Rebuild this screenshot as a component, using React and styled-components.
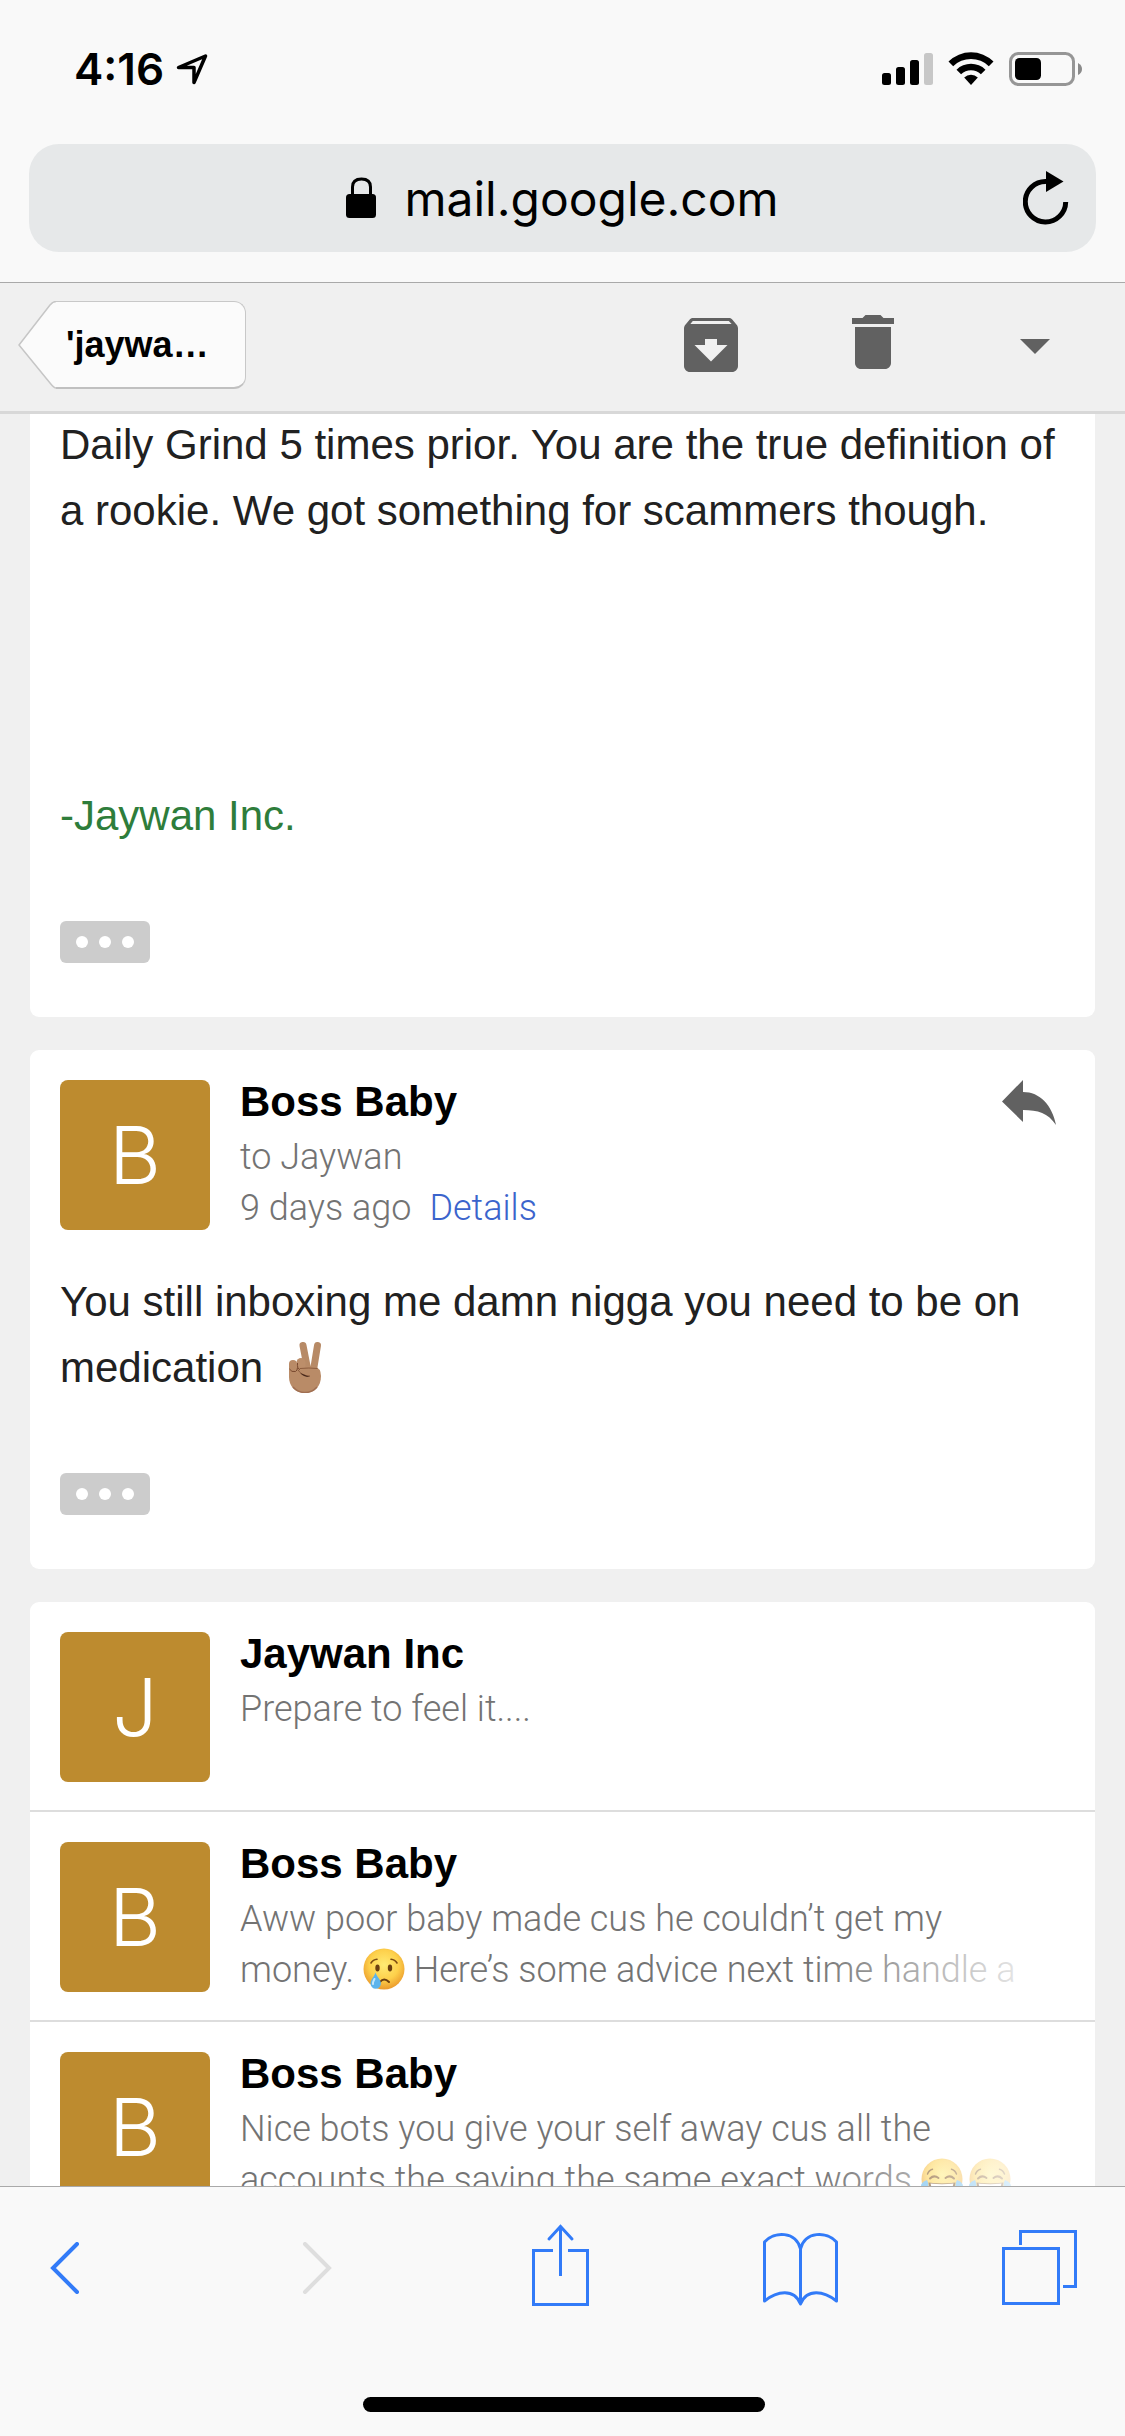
import React from "react"
import styled, { createGlobalStyle } from "styled-components"

const GlobalStyle = createGlobalStyle`
  * {
    box-sizing: border-box;
  }

  body {
    margin: 0;
    background-color: #F0F0F0;
    font-family: "Liberation Sans", Arial, sans-serif;
    color: #212121;
  }
`

const Screen = styled.div`
  display: flex;
  flex-direction: column;
  height: 100vh;
  overflow: hidden;
`

const BrowserHeader = styled.header`
  flex: none;
  padding-bottom: 30px;
  background-color: #F9F9F9;
  border-bottom: 1px solid #A9A9A9;
`

const StatusBar = styled.div`
  display: flex;
  align-items: center;
  justify-content: space-between;
  height: 144px;
  padding: 0 43px 6px 74px;
`

const StatusGroup = styled.div`
  display: flex;
  align-items: center;
  gap: ${props => props.$gap}px;
`

const Clock = styled.span`
  color: black;
  font-family: Inter, sans-serif;
  font-size: 44px;
  font-weight: 600;
`

const AddressBar = styled.div`
  display: grid;
  grid-template-columns: 1fr auto 1fr;
  align-items: center;
  height: 108px;
  margin: 0 29px;
  padding: 0 27px;
  border-radius: 30px;
  background-color: #E6E8E9;
`

const PlainButton = styled.button`
  display: flex;
  align-items: center;
  padding: 0;
  border: none;
  background: none;
  color: inherit;
  font: inherit;
  cursor: pointer;
`

const Address = styled(PlainButton)`
  grid-column: 2;
  gap: 28px;
  color: black;
  font-family: Inter, sans-serif;
  font-size: 48px;
`

const ReloadButton = styled(PlainButton)`
  justify-self: end;
`

const MailToolbar = styled.nav`
  display: flex;
  flex: none;
  align-items: center;
  gap: 90px;
  height: 131px;
  padding: 0 54px 4px 18px;
  border-bottom: 3px solid #D8D8D8;
  color: #616161;
`

const BackButton = styled(PlainButton)`
  margin-right: auto;
  color: black;
  font-size: 36px;
  font-weight: bold;
`

const BackLabel = styled.span`
  height: 88px;
  padding: 0 36px 0 10px;
  border: 1px solid #C8C8C8;
  border-left: none;
  border-bottom: 2px solid #C0C0C0;
  border-radius: 0 12px 12px 0;
  background-color: #FBFBFB;
  line-height: 86px;
`

const Thread = styled.main`
  display: flex;
  flex: 1;
  flex-direction: column;
  gap: 33px;
  min-height: 0;
  padding: 0 30px;
  overflow: hidden;
`

const Card = styled.article`
  flex: none;
  border-radius: 9px;
  background-color: white;
`

const OpenCard = styled(Card)`
  padding: 30px 30px 54px;
`

/* top part is scrolled under the toolbar */
const ScrolledCard = styled(Card)`
  margin-top: -2px;
  padding: 0 30px 54px;
  border-radius: 0 0 9px 9px;
`

const MessageText = styled.p`
  margin: ${props => props.$top || 0}px 0 0;
  color: ${props => props.$color || "#212121"};
  font-size: 42px;
  line-height: 66px;
`

const QuoteButton = styled(PlainButton)`
  justify-content: center;
  gap: 11px;
  width: 90px;
  height: 42px;
  margin-top: 72px;
  border-radius: 6px;
  background-color: #CCCCCC;
`

const Dot = styled.span`
  width: 12px;
  height: 12px;
  border-radius: 50%;
  background-color: white;
`

const Row = styled.div`
  display: flex;
  gap: 30px;
`

const CollapsedRow = styled(Row)`
  padding: 30px 30px 28px;
  border-bottom: 2px solid #DDDDDD;
`

const Avatar = styled.div`
  flex: none;
  width: 150px;
  height: 150px;
  border-radius: 8px;
  background-color: #BD8B2F;
  color: white;
  font-family: Inter, sans-serif;
  font-size: 80px;
  font-weight: 300;
  line-height: 150px;
  text-align: center;
`

const Summary = styled.div`
  flex: 1;
  min-width: 0;
  max-height: 150px;
`

const Sender = styled.h2`
  margin: 0 0 9px;
  color: black;
  font-size: 42px;
  font-weight: bold;
  line-height: 43px;
`

const Meta = styled.div`
  color: #737373;
  font-family: Roboto, sans-serif;
  font-size: 36px;
  font-weight: 300;
  line-height: 51px;
`

const DetailsLink = styled.a`
  margin-left: 18px;
  color: #3B64CC;
  text-decoration: none;
`

const Snippet = styled(Meta)`
  position: relative;
  height: 102px;

  /* fades the end of the second line */
  &::after {
    content: "";
    position: absolute;
    right: 0;
    bottom: 0;
    width: 255px;
    height: 51px;
    background: linear-gradient(to right, rgba(255, 255, 255, 0), white);
  }
`

const ReplyButton = styled(PlainButton)`
  align-self: flex-start;
  margin-right: 9px;
`

const EmojiSvg = styled.svg`
  margin-left: ${props => props.$before || 0}px;
  margin-right: ${props => props.$after || 0}px;
  vertical-align: ${props => props.$drop}px;
`

const BrowserFooter = styled.footer`
  display: flex;
  flex: none;
  flex-direction: column;
  align-items: center;
  justify-content: space-between;
  height: 250px;
  padding: 30px 47px 24px 50px;
  border-top: 1px solid #A9A9A9;
  background-color: #F9F9F9;
`

const TabBar = styled.div`
  display: grid;
  grid-template-columns: 252fr 230fr 231fr 239fr 76px;
  align-items: center;
  align-self: stretch;
  height: 102px;
  color: #327BF8;
`

const ForwardButton = styled(PlainButton)`
  color: #DEDEDE;
`

const HomeIndicator = styled.div`
  width: 402px;
  height: 15px;
  border-radius: 8px;
  background-color: black;
`

function Cry() {
  return <EmojiSvg width="42" height="42" viewBox="0 0 42 42" $drop={-8} role="img" aria-label="crying face">
    <defs>
      <radialGradient id="face" cx="0.5" cy="0.4" r="0.6">
        <stop offset="0" stopColor="#FFEB74"/>
        <stop offset="0.6" stopColor="#FDD04B"/>
        <stop offset="1" stopColor="#EB9A2C"/>
      </radialGradient>
    </defs>
    <circle cx="21" cy="21" r="20.5" fill="url(#face)"/>
    <path d="M8 15q2-3.5 6-3.8M34 15q-2-3.5-6-3.8" fill="none" stroke="#7A4B12" strokeWidth="1.6" strokeLinecap="round"/>
    <ellipse cx="14.5" cy="20" rx="2.2" ry="3.4" fill="#6B3F10"/>
    <ellipse cx="27" cy="20" rx="2.2" ry="3.4" fill="#6B3F10"/>
    <path d="M17 34q4-5 9 0" fill="none" stroke="#6B3F10" strokeWidth="2" strokeLinecap="round"/>
    <path d="M12.5 24.5c-1 4-5 7-5 11a5.2 5.2 0 0 0 10.4 0c0-4-4.4-7-5.4-11z" fill="#5DB4EC"/>
    <path d="M11.5 31c-1 2-2 3-1.5 5" fill="none" stroke="#C4E8FC" strokeWidth="2" strokeLinecap="round"/>
  </EmojiSvg>
}

function Joy() {
  return <EmojiSvg width="42" height="42" viewBox="0 0 42 42" $drop={-8} $after={6} role="img" aria-label="face with tears of joy">
    <circle cx="21" cy="21" r="20.5" fill="url(#face)"/>
    <path d="M6.5 16q1.5-4 5-4.8M35.5 16q-1.5-4-5-4.8" fill="none" stroke="#7A4B12" strokeWidth="1.5" strokeLinecap="round"/>
    <path d="M9 20.5q4-4 8.5-.5M33 20.5q-4-4-8.5-.5" fill="none" stroke="#7A4B12" strokeWidth="2" strokeLinecap="round"/>
    <path d="M7.5 24.5q13.5 2 27 0q-1 12.5-13.5 12.5t-13.5-12.5z" fill="#6B3F10"/>
    <path d="M9.5 25.5q11.5 1.5 23 0l-1 3.5q-10.5 1.5-21 0z" fill="white"/>
    <path d="M6 22c-3 1-6 3-6 6.5a3.8 3.8 0 0 0 6.5 2.5c1.5-2 1-6-.5-9zM36 22c3 1 6 3 6 6.5a3.8 3.8 0 0 1-6.5 2.5c-1.5-2-1-6 .5-9z" fill="#5DB4EC"/>
  </EmojiSvg>
}

function Peace() {
  return <EmojiSvg width="36" height="52" viewBox="0 0 36 52" $drop={-11} $before={12} role="img" aria-label="victory hand">
    <path d="M16 4.5L20 25M30.5 4.500L27 26" fill="none" stroke="#B78A66" strokeWidth="7" strokeLinecap="round"/>
    <path d="M2 28q0-3 3-3h22q7 2 7 10c0 10-6 17-16 17S2 45 2 36z" fill="#B98B67"/>
    <rect x="2" y="19" width="8" height="12" rx="4" fill="#B98B67"/>
    <rect x="9.5" y="17" width="9" height="12" rx="4.5" fill="#BC8E6A"/>
    <path d="M2.5 28q2 3.5 6 2.5q2-1 2-4M10.5 22q-.5 6 2.500 6.500" fill="none" stroke="#79492F" strokeWidth="1"/>
    <path d="M11 29q4 6 12 6M13 27.5q9-1 17.5 0" fill="none" stroke="#8C5C3E" strokeWidth="1"/>
    <path d="M13 32q5 2 10 4q-6 .5-10-4z" fill="#44261A"/>
    <path d="M6 46q5 5.5 12 5.5t12-5.5" fill="none" stroke="#A06F52" strokeWidth="1.5"/>
  </EmojiSvg>
}

function ShowQuoted() {
  return <QuoteButton aria-label="Show quoted text">
    <Dot/>
    <Dot/>
    <Dot/>
  </QuoteButton>
}

function CollapsedMessage({ initial, sender, children }) {
  return <CollapsedRow>
    <Avatar>{initial}</Avatar>
    <Summary>
      <Sender>{sender}</Sender>
      <Snippet>{children}</Snippet>
    </Summary>
  </CollapsedRow>
}

export default function App() {
  return <Screen>
    <GlobalStyle/>
    <BrowserHeader>
      <StatusBar>
        <StatusGroup $gap={12}>
          <Clock>4:16</Clock>
          <svg width="32" height="32" viewBox="0 0 32 32" fill="none" stroke="black" strokeWidth="3.5" strokeLinejoin="round">
            <path d="M2.5 14.5L29.5 3L18 29.5V14.5Z"/>
          </svg>
        </StatusGroup>
        <StatusGroup $gap={15}>
          <svg width="51" height="34" viewBox="0 0 51 34">
            <rect x="0" y="21" width="9" height="12" rx="2.5"/>
            <rect x="14" y="15" width="9" height="18" rx="2.5"/>
            <rect x="28" y="8" width="9" height="25" rx="2.5"/>
            <rect x="42" y="1" width="9" height="32" rx="2.5" fill="#C7C7C7"/>
          </svg>
          <svg width="46" height="34" viewBox="0 0 46 34">
            <path d="M0.5 9.5A32 32 0 0 1 45.5 9.5L40.8 14.2A25.5 25.5 0 0 0 5.2 14.2Z"/>
            <path d="M8.5 17.7A20.8 20.8 0 0 1 37.5 17.7L32.9 22.2A14.4 14.4 0 0 0 13.1 22.2Z"/>
            <path d="M16.2 25.5A9.8 9.8 0 0 1 29.8 25.5L23 33Z"/>
          </svg>
          <svg width="73" height="34" viewBox="0 0 73 34">
            <rect x="1.5" y="1.5" width="63" height="31" rx="8" fill="none" stroke="#969696" strokeWidth="3"/>
            <rect x="6" y="6" width="26" height="22" rx="4.5"/>
            <path d="M69 11Q73 13 73 17T69 23Z" fill="#8A8A8A"/>
          </svg>
        </StatusGroup>
      </StatusBar>
      <AddressBar>
        <Address>
          <svg width="30" height="42" viewBox="0 0 30 42">
            <path d="M6.5 19V10Q6.5 2 15.5 2T24.5 10V19" fill="none" stroke="black" strokeWidth="3"/>
            <rect x="0" y="17" width="30" height="24" rx="3.5"/>
          </svg>
          mail.google.com
        </Address>
        <ReloadButton aria-label="Reload">
          <svg width="46" height="54" viewBox="0 0 46 54">
            <path d="M23 10.5A20.2 20.2 0 1 0 42.7 31" fill="none" stroke="black" strokeWidth="5"/>
            <path d="M23 0L40.5 10.5L23 21Z"/>
          </svg>
        </ReloadButton>
      </AddressBar>
    </BrowserHeader>

    <MailToolbar>
      <BackButton>
        <svg width="38" height="88" viewBox="0 0 38 88">
          <path d="M38 0.5Q35 0.5 32 4L1 44L32 82Q36 87 38 87" fill="#FBFBFB"/>
          <path d="M38 0.5Q35 0.5 32 4L1 44L32 82Q36 87 38 87" fill="none" stroke="#C6C6C6" strokeWidth="1.5"/>
        </svg>
        <BackLabel>'jaywa…</BackLabel>
      </BackButton>
      <PlainButton aria-label="Archive">
        <svg width="72" height="72" viewBox="0 0 24 24" fill="currentColor">
          <path d="M20.54 5.23l-1.39-1.68C18.88 3.21 18.47 3 18 3H6c-.47 0-.88.21-1.16.55L3.46 5.23C3.17 5.57 3 6.02 3 6.5V19c0 1.1.9 2 2 2h14c1.1 0 2-.9 2-2V6.5c0-.48-.17-.93-.46-1.27zM12 17.5L6.5 12H10v-2h4v2h3.5L12 17.5zM5.12 5l.81-1h12l.94 1H5.12z"/>
        </svg>
      </PlainButton>
      <PlainButton aria-label="Delete">
        <svg width="72" height="72" viewBox="0 1 24 24" fill="currentColor">
          <path d="M6 19c0 1.100.9 2 2 2h8c1.100 0 2-.9 2-2V7H6v12zM19 4h-3.500l-1-1h-5l-1 1H5v2h14V4z"/>
        </svg>
      </PlainButton>
      <PlainButton aria-label="More">
        <svg width="72" height="72" viewBox="0 0 24 24" fill="currentColor">
          <path d="M7 10l5 5 5-5z"/>
        </svg>
      </PlainButton>
    </MailToolbar>

    <Thread>
      <ScrolledCard>
        <MessageText>Daily Grind 5 times prior. You are the true definition of a rookie. We got something for scammers though.</MessageText>
        <MessageText $top={239} $color="#2E7D3B">-Jaywan Inc.</MessageText>
        <ShowQuoted/>
      </ScrolledCard>

      <OpenCard>
        <Row>
          <Avatar>B</Avatar>
          <Summary>
            <Sender>Boss Baby</Sender>
            <Meta>to Jaywan</Meta>
            <Meta>9 days ago<DetailsLink href="#details">Details</DetailsLink></Meta>
          </Summary>
          <ReplyButton aria-label="Reply">
            <svg width="54" height="46" viewBox="0 0 54 46" fill="#616161">
              <path d="M0 21.5L21 0V12C38 12 50 25 54 45C46 33 36 30 21 30V42Z"/>
            </svg>
          </ReplyButton>
        </Row>
        <MessageText $top={39}>You still inboxing me damn nigga you need to be on medication <Peace/></MessageText>
        <ShowQuoted/>
      </OpenCard>

      <Card>
        <CollapsedMessage initial="J" sender="Jaywan Inc">Prepare to feel it....</CollapsedMessage>
        <CollapsedMessage initial="B" sender="Boss Baby">
          Aww poor baby made cus he couldn’t get my<br/>
          money. <Cry/> Here’s some advice next time handle a
        </CollapsedMessage>
        <CollapsedMessage initial="B" sender="Boss Baby">
          Nice bots you give your self away cus all the<br/>
          accounts the saying the same exact words <Joy/><Joy/>
        </CollapsedMessage>
      </Card>
    </Thread>

    <BrowserFooter>
      <TabBar>
        <PlainButton aria-label="Back">
          <svg width="30" height="52" viewBox="0 0 30 52" fill="none" stroke="currentColor" strokeWidth="4" strokeLinecap="round">
            <path d="M27 2L3 26L27 50"/>
          </svg>
        </PlainButton>
        <ForwardButton aria-label="Forward" disabled>
          <svg width="30" height="52" viewBox="0 0 30 52" fill="none" stroke="currentColor" strokeWidth="4" strokeLinecap="round">
            <path d="M3 2L27 26L3 50"/>
          </svg>
        </ForwardButton>
        <PlainButton aria-label="Share">
          <svg width="58" height="94" viewBox="0 0 58 94" fill="none" stroke="currentColor" strokeWidth="3">
            <path d="M21 29.5H1.5V83.5H55.5V29.5H36M28.5 55V5"/>
            <path d="M17 18L28.5 5.5L40 18" strokeLinecap="round"/>
          </svg>
        </PlainButton>
        <PlainButton aria-label="Bookmarks">
          <svg width="76" height="76" viewBox="0 0 76 76" fill="none" stroke="currentColor" strokeWidth="3" strokeLinejoin="round">
            <path d="M37.5 19C33 1 11 1 1.5 12V71C14 61 31 58 37.5 74C44 58 61 61 73.5 71V12C64 1 42 1 37.5 19V74"/>
          </svg>
        </PlainButton>
        <PlainButton aria-label="Tabs">
          <svg width="76" height="76" viewBox="0 0 76 76" fill="none" stroke="currentColor" strokeWidth="3">
            <rect x="1.5" y="18.5" width="55" height="55"/>
            <path d="M18.5 15V1.5H73.5V56.5H61"/>
          </svg>
        </PlainButton>
      </TabBar>
      <HomeIndicator/>
    </BrowserFooter>
  </Screen>
}
